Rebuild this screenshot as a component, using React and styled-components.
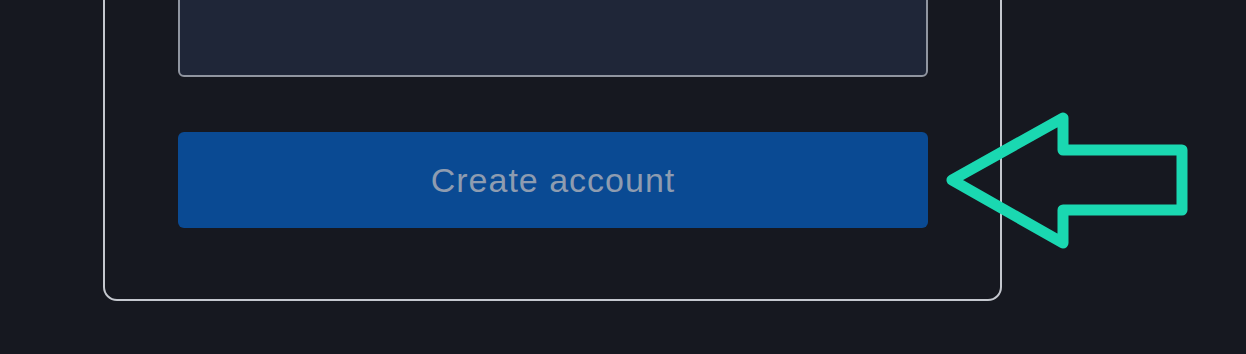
import React from "react";
import styled, { createGlobalStyle } from "styled-components";

const GlobalStyle = createGlobalStyle`
  html, body {
    margin: 0;
    padding: 0;
    background: #161820;
  }
`;

const Page = () => (
  <>
    <GlobalStyle />
    <Screen>
      <Card>
        <Message />
        <SubmitButton type="button">Create account</SubmitButton>
      </Card>
      <Pointer viewBox="0 0 260 150" aria-hidden="true">
        <polygon
          points="12,72 123,10 123,42 242,42 242,102 123,102 123,135"
          fill="none"
          stroke="#1ad8b1"
          strokeWidth="11"
          strokeLinejoin="round"
        />
      </Pointer>
    </Screen>
  </>
);

export default Page;

const Screen = styled.div`
  position: relative;
  width: 1246px;
  height: 354px;
  overflow: hidden;
  display: flex;
  flex-direction: column;
  justify-content: flex-end;
  padding: 0 0 53px 103px;
  box-sizing: border-box;
  font-family: "Liberation Sans", Arial, sans-serif;
`;

const Card = styled.div`
  width: 899px;
  box-sizing: border-box;
  flex-shrink: 0;
  display: flex;
  flex-direction: column;
  gap: 55px;
  padding: 40px 72px 71px 73px;
  border: 2px solid #c4c7ce;
  border-radius: 14px;
  background: #161820;
`;

const Message = styled.div`
  height: 200px;
  border: 2px solid #9095a0;
  border-radius: 6px;
  background: #1f2638;
`;

const SubmitButton = styled.button`
  height: 96px;
  border: none;
  border-radius: 6px;
  background: #0a4a93;
  color: #8e9cb0;
  font-family: "Liberation Sans", Arial, sans-serif;
  font-size: 34px;
  letter-spacing: 1px;
  padding: 0;
  cursor: pointer;
`;

const Pointer = styled.svg`
  position: absolute;
  left: 940px;
  top: 108px;
  width: 260px;
  height: 150px;
`;
